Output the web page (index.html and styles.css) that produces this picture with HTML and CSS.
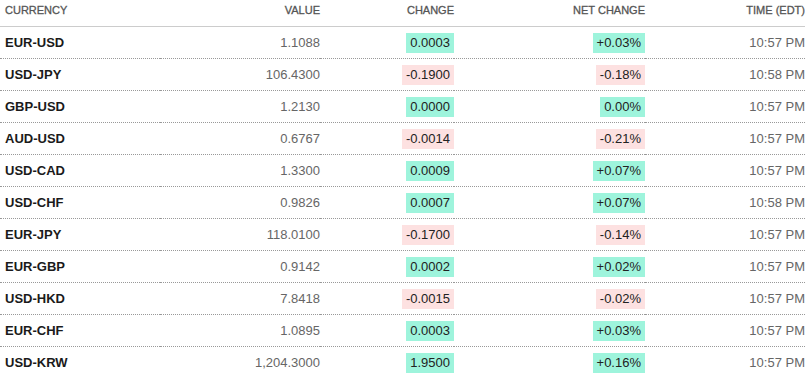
FILE: index.html
```html
<!DOCTYPE html>
<html lang="en">
<head>
    <meta charset="UTF-8">
    <meta name="viewport" content="width=device-width, initial-scale=1.0">
    <title>Currencies</title>
    <link rel="stylesheet" href="styles.css">
</head>
<body>
    <table class="fx-table">
        <colgroup>
            <col class="col-pair">
            <col class="col-value">
            <col class="col-change">
            <col class="col-net">
            <col class="col-time">
        </colgroup>
        <thead>
            <tr>
                <th class="pair">Currency</th>
                <th>Value</th>
                <th>Change</th>
                <th>Net Change</th>
                <th>Time (EDT)</th>
            </tr>
        </thead>
        <tbody>
            <tr>
                <td class="pair">EUR-USD</td>
                <td class="value">1.1088</td>
                <td><span class="badge up">0.0003</span></td>
                <td><span class="badge up">+0.03%</span></td>
                <td class="time">10:57 PM</td>
            </tr>
            <tr>
                <td class="pair">USD-JPY</td>
                <td class="value">106.4300</td>
                <td><span class="badge down">-0.1900</span></td>
                <td><span class="badge down">-0.18%</span></td>
                <td class="time">10:58 PM</td>
            </tr>
            <tr>
                <td class="pair">GBP-USD</td>
                <td class="value">1.2130</td>
                <td><span class="badge up">0.0000</span></td>
                <td><span class="badge up">0.00%</span></td>
                <td class="time">10:57 PM</td>
            </tr>
            <tr>
                <td class="pair">AUD-USD</td>
                <td class="value">0.6767</td>
                <td><span class="badge down">-0.0014</span></td>
                <td><span class="badge down">-0.21%</span></td>
                <td class="time">10:57 PM</td>
            </tr>
            <tr>
                <td class="pair">USD-CAD</td>
                <td class="value">1.3300</td>
                <td><span class="badge up">0.0009</span></td>
                <td><span class="badge up">+0.07%</span></td>
                <td class="time">10:57 PM</td>
            </tr>
            <tr>
                <td class="pair">USD-CHF</td>
                <td class="value">0.9826</td>
                <td><span class="badge up">0.0007</span></td>
                <td><span class="badge up">+0.07%</span></td>
                <td class="time">10:58 PM</td>
            </tr>
            <tr>
                <td class="pair">EUR-JPY</td>
                <td class="value">118.0100</td>
                <td><span class="badge down">-0.1700</span></td>
                <td><span class="badge down">-0.14%</span></td>
                <td class="time">10:57 PM</td>
            </tr>
            <tr>
                <td class="pair">EUR-GBP</td>
                <td class="value">0.9142</td>
                <td><span class="badge up">0.0002</span></td>
                <td><span class="badge up">+0.02%</span></td>
                <td class="time">10:57 PM</td>
            </tr>
            <tr>
                <td class="pair">USD-HKD</td>
                <td class="value">7.8418</td>
                <td><span class="badge down">-0.0015</span></td>
                <td><span class="badge down">-0.02%</span></td>
                <td class="time">10:57 PM</td>
            </tr>
            <tr>
                <td class="pair">EUR-CHF</td>
                <td class="value">1.0895</td>
                <td><span class="badge up">0.0003</span></td>
                <td><span class="badge up">+0.03%</span></td>
                <td class="time">10:57 PM</td>
            </tr>
            <tr>
                <td class="pair">USD-KRW</td>
                <td class="value">1,204.3000</td>
                <td><span class="badge up">1.9500</span></td>
                <td><span class="badge up">+0.16%</span></td>
                <td class="time">10:57 PM</td>
            </tr>
        </tbody>
    </table>
</body>
</html>
```

FILE: styles.css
```css
body {
    margin: 0;
    font-family: "Liberation Sans", Arial, sans-serif;
    background-color: #fff;
    color: #222;
}

.fx-table {
    width: 805px;
    border-collapse: collapse;
    table-layout: fixed;
}

.col-pair { width: 160px; }
.col-value { width: 160px; }
.col-change { width: 134px; }
.col-net { width: 191px; }
.col-time { width: 160px; }

.fx-table th {
    height: 26px;
    padding: 0;
    font-size: 11px;
    font-weight: normal;
    text-transform: uppercase;
    text-align: right;
    vertical-align: top;
    line-height: 21px;
    color: #555;
    border-bottom: 1px solid #ccc;
    -webkit-text-stroke: 0.3px #555;
}

.fx-table td {
    height: 31px;
    padding: 0;
    font-size: 13px;
    text-align: right;
    vertical-align: middle;
    border-bottom: 1px dotted #999;
}

.fx-table tbody tr:last-child td {
    border-bottom: none;
}

.fx-table th.pair,
.fx-table td.pair {
    text-align: left;
    padding-left: 5px;
}

.fx-table td.pair {
    font-weight: bold;
    color: #1a1a1a;
}

.value,
.time {
    color: #666;
}

.badge {
    display: inline-block;
    line-height: 20px;
    padding: 0 4px;
    color: #222;
}

.badge.up {
    background-color: #9ef4dc;
}

.badge.down {
    background-color: #fde1e1;
}
```
